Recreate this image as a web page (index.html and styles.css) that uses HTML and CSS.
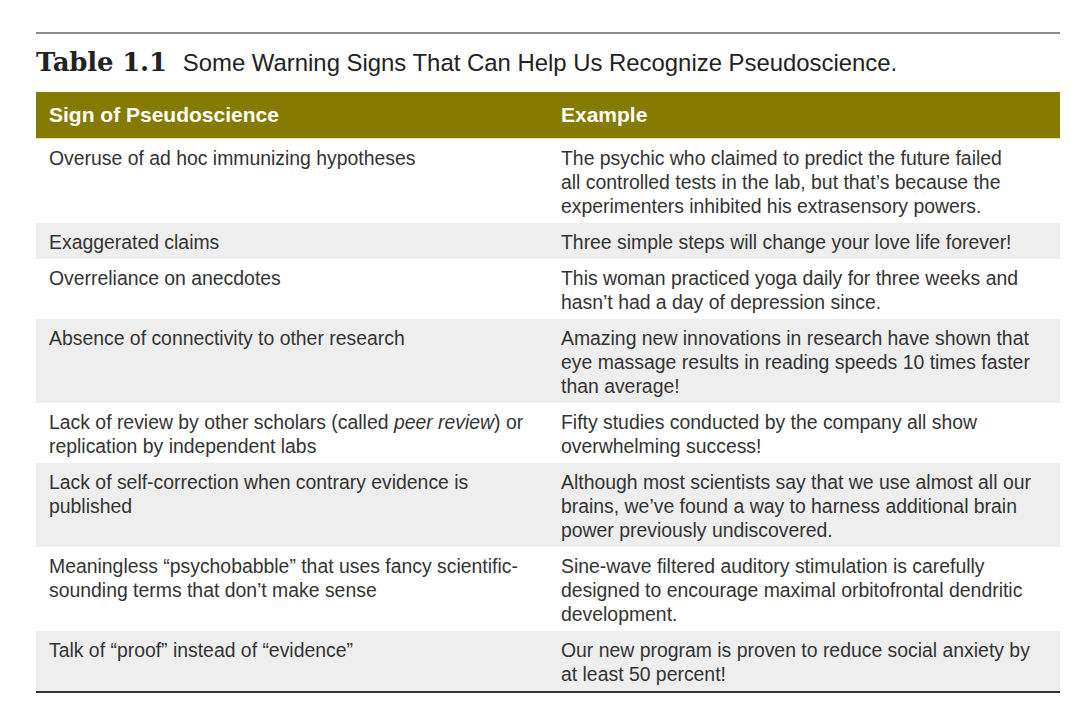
FILE: index.html
```html
<!DOCTYPE html>
<html>
<head>
<meta charset="utf-8">
<link rel="stylesheet" href="styles.css">
</head>
<body>
<div class="page">
  <div class="title">
    <span class="tnum">Table 1.1</span>
    <span class="tcap">Some Warning Signs That Can Help Us Recognize Pseudoscience.</span>
  </div>
  <div class="table">
    <div class="row head">
      <div class="cell">Sign of Pseudoscience</div>
      <div class="cell">Example</div>
    </div>
    <div class="row">
      <div class="cell">Overuse of ad hoc immunizing hypotheses</div>
      <div class="cell">The psychic who claimed to predict the future failed<br>all controlled tests in the lab, but that’s because the<br>experimenters inhibited his extrasensory powers.</div>
    </div>
    <div class="row alt">
      <div class="cell">Exaggerated claims</div>
      <div class="cell">Three simple steps will change your love life forever!</div>
    </div>
    <div class="row">
      <div class="cell">Overreliance on anecdotes</div>
      <div class="cell">This woman practiced yoga daily for three weeks and<br>hasn’t had a day of depression since.</div>
    </div>
    <div class="row alt">
      <div class="cell">Absence of connectivity to other research</div>
      <div class="cell">Amazing new innovations in research have shown that<br>eye massage results in reading speeds 10 times faster<br>than average!</div>
    </div>
    <div class="row">
      <div class="cell">Lack of review by other scholars (called <i>peer review</i>) or<br>replication by independent labs</div>
      <div class="cell">Fifty studies conducted by the company all show<br>overwhelming success!</div>
    </div>
    <div class="row alt">
      <div class="cell">Lack of self-correction when contrary evidence is<br>published</div>
      <div class="cell">Although most scientists say that we use almost all our<br>brains, we’ve found a way to harness additional brain<br>power previously undiscovered.</div>
    </div>
    <div class="row">
      <div class="cell">Meaningless “psychobabble” that uses fancy scientific-<br>sounding terms that don’t make sense</div>
      <div class="cell">Sine-wave filtered auditory stimulation is carefully<br>designed to encourage maximal orbitofrontal dendritic<br>development.</div>
    </div>
    <div class="row alt last">
      <div class="cell">Talk of “proof” instead of “evidence”</div>
      <div class="cell">Our new program is proven to reduce social anxiety by<br>at least 50 percent!</div>
    </div>
  </div>
</div>
</body>
</html>
```

FILE: styles.css
```css
html, body {
  margin: 0;
  padding: 0;
  background: #ffffff;
}
.page {
  width: 1024px;
  margin-left: 36px;
  padding-top: 32px;
  font-family: "Liberation Sans", Arial, sans-serif;
  color: #333333;
}
.title {
  border-top: 2px solid #8c8c8c;
  height: 60px;
  box-sizing: border-box;
  display: flex;
  align-items: baseline;
  padding-top: 13px;
  white-space: nowrap;
}
.tnum {
  font-family: "DejaVu Serif", "Liberation Serif", serif;
  font-size: 26px;
  font-weight: bold;
  color: #222222;
  margin-right: 16px;
  letter-spacing: -0.2px;
}
.tcap {
  font-size: 23.9px;
  color: #222222;
}
.table {
  border-bottom: 2px solid #333333;
}
.row {
  display: grid;
  grid-template-columns: 512px 512px;
  font-size: 19.4px;
  line-height: 24px;
}
.row .cell {
  padding: 7px 13px 5px;
  white-space: nowrap;
}
.row.alt {
  background: #eeeeee;
}
.row.head {
  background: #857b00;
  color: #ffffff;
  font-weight: bold;
  font-size: 21px;
  height: 47px;
  box-sizing: border-box;
  align-items: center;
  border-bottom: 1px solid #e6dfa6;
}
.row.head .cell {
  padding-top: 0;
  padding-bottom: 0;
}
```
